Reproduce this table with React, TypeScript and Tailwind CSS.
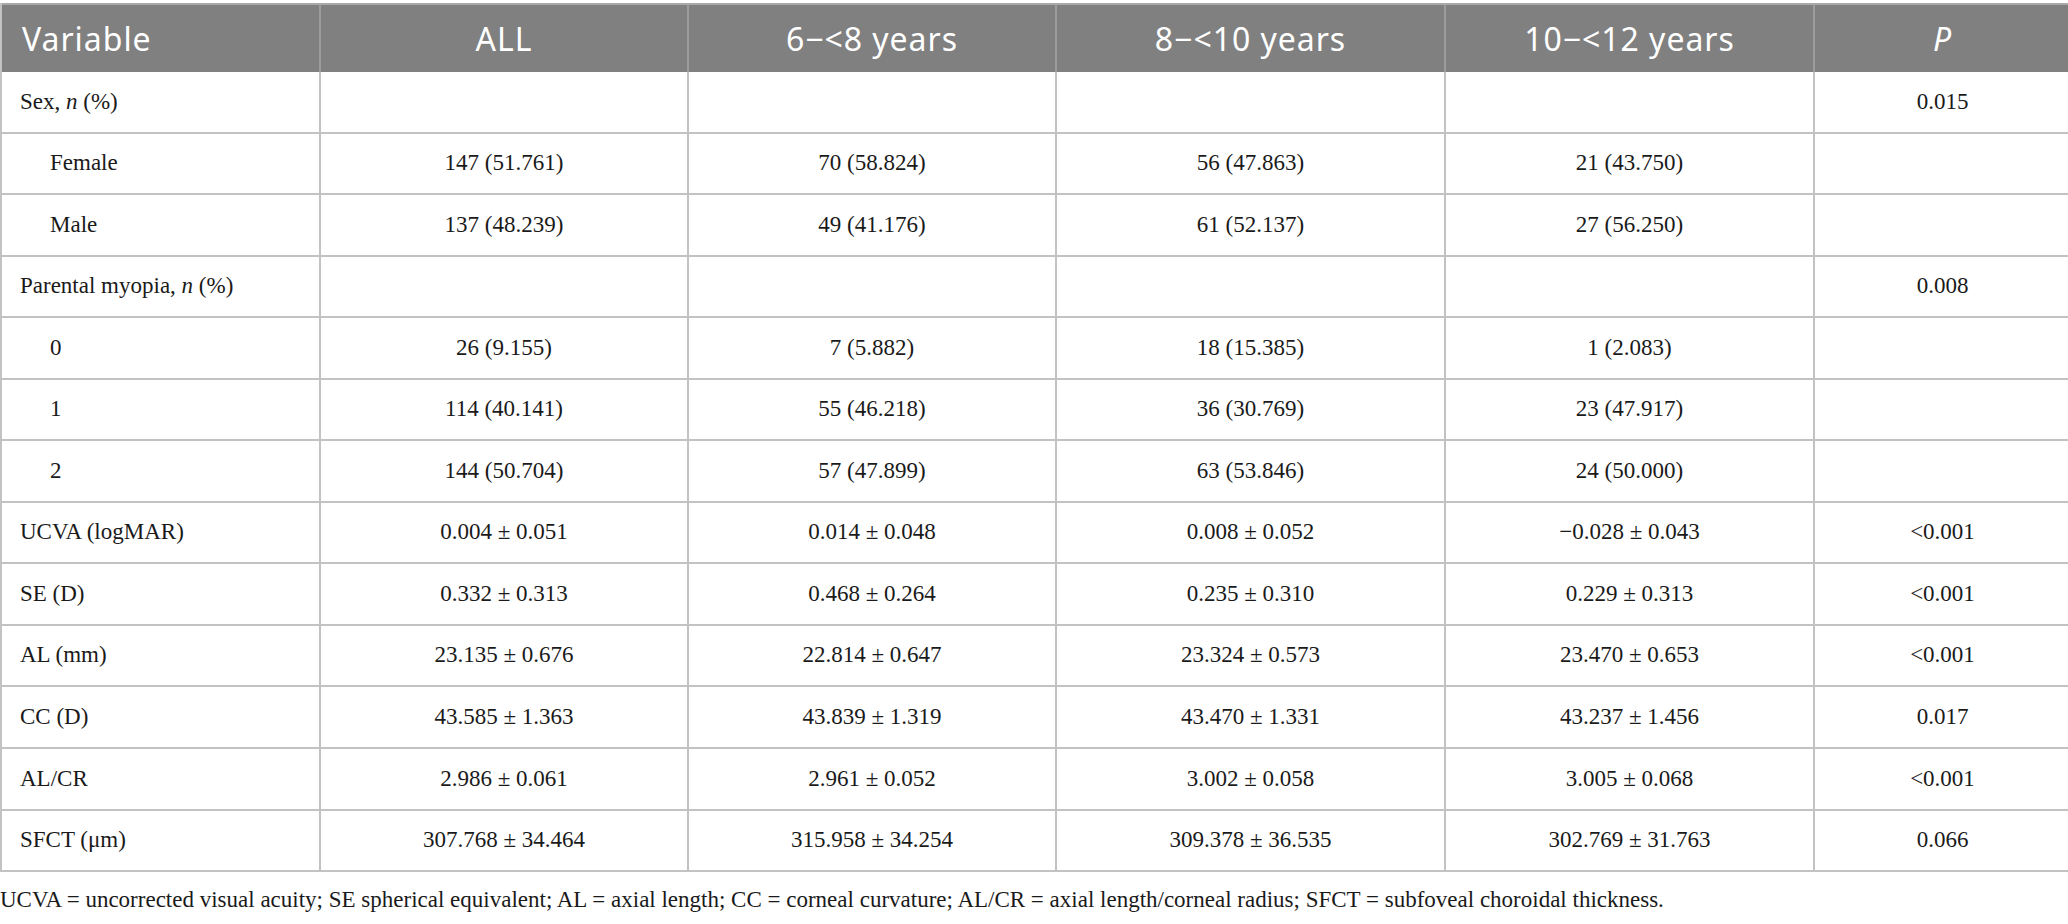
import React from "react";

type Row = {
  label: React.ReactNode;
  indent?: boolean;
  cells: string[];
  p: string;
};

const rows: Row[] = [
  { label: <>Sex, <i>n</i> (%)</>, cells: ["", "", "", ""], p: "0.015" },
  { label: "Female", indent: true, cells: ["147 (51.761)", "70 (58.824)", "56 (47.863)", "21 (43.750)"], p: "" },
  { label: "Male", indent: true, cells: ["137 (48.239)", "49 (41.176)", "61 (52.137)", "27 (56.250)"], p: "" },
  { label: <>Parental myopia, <i>n</i> (%)</>, cells: ["", "", "", ""], p: "0.008" },
  { label: "0", indent: true, cells: ["26 (9.155)", "7 (5.882)", "18 (15.385)", "1 (2.083)"], p: "" },
  { label: "1", indent: true, cells: ["114 (40.141)", "55 (46.218)", "36 (30.769)", "23 (47.917)"], p: "" },
  { label: "2", indent: true, cells: ["144 (50.704)", "57 (47.899)", "63 (53.846)", "24 (50.000)"], p: "" },
  { label: "UCVA (logMAR)", cells: ["0.004 ± 0.051", "0.014 ± 0.048", "0.008 ± 0.052", "−0.028 ± 0.043"], p: "<0.001" },
  { label: "SE (D)", cells: ["0.332 ± 0.313", "0.468 ± 0.264", "0.235 ± 0.310", "0.229 ± 0.313"], p: "<0.001" },
  { label: "AL (mm)", cells: ["23.135 ± 0.676", "22.814 ± 0.647", "23.324 ± 0.573", "23.470 ± 0.653"], p: "<0.001" },
  { label: "CC (D)", cells: ["43.585 ± 1.363", "43.839 ± 1.319", "43.470 ± 1.331", "43.237 ± 1.456"], p: "0.017" },
  { label: "AL/CR", cells: ["2.986 ± 0.061", "2.961 ± 0.052", "3.002 ± 0.058", "3.005 ± 0.068"], p: "<0.001" },
  { label: "SFCT (μm)", cells: ["307.768 ± 34.464", "315.958 ± 34.254", "309.378 ± 36.535", "302.769 ± 31.763"], p: "0.066" },
];

const headers: React.ReactNode[] = ["ALL", "6−<8 years", "8−<10 years", "10−<12 years", <i key="p">P</i>];

const cols = "grid grid-cols-[319px_368px_368px_389px_369px_255px]";

export default function App() {
  return (
    <div className="w-[2068px] h-[924px] bg-white pt-[3px] font-['Liberation_Serif',serif] text-[#1a1a1a]">
      {/* Table */}
      <div className="border-l-2 border-[#c2c2c2]">
        <div className={`${cols} h-[69px] bg-[#808080] border-t-2 border-[#a9a9a9] font-['Noto_Sans',sans-serif] text-[32px] tracking-[0.03em] font-normal text-white`}>
          <div className="flex items-center pl-[20px] border-r-2 border-[#9c9c9c]">
            <span>Variable</span>
          </div>
          {headers.map((h, i) => (
            <div
              key={i}
              className={`flex items-center justify-center ${i < 4 ? "border-r-2 border-[#9c9c9c]" : ""}`}
            >
              <span>{h}</span>
            </div>
          ))}
        </div>

        {rows.map((r, ri) => (
          <div key={ri} className={`${cols} h-[61.55px] text-[23px]`}>
            <div
              className={`flex items-center border-r-2 border-b-2 border-[#c2c2c2] ${r.indent ? "pl-[48px]" : "pl-[18px]"}`}
            >
              <span>{r.label}</span>
            </div>
            {r.cells.map((c, ci) => (
              <div key={ci} className="flex items-center justify-center border-r-2 border-b-2 border-[#c2c2c2]">
                {c}
              </div>
            ))}
            <div className="flex items-center justify-center border-b-2 border-[#c2c2c2]">{r.p}</div>
          </div>
        ))}
      </div>

      {/* Footnote */}
      <p className="mt-[13px] text-[23px] leading-[30px]">
        UCVA = uncorrected visual acuity; SE spherical equivalent; AL = axial length; CC = corneal curvature; AL/CR = axial
        length/corneal radius; SFCT = subfoveal choroidal thickness.
      </p>
    </div>
  );
}
